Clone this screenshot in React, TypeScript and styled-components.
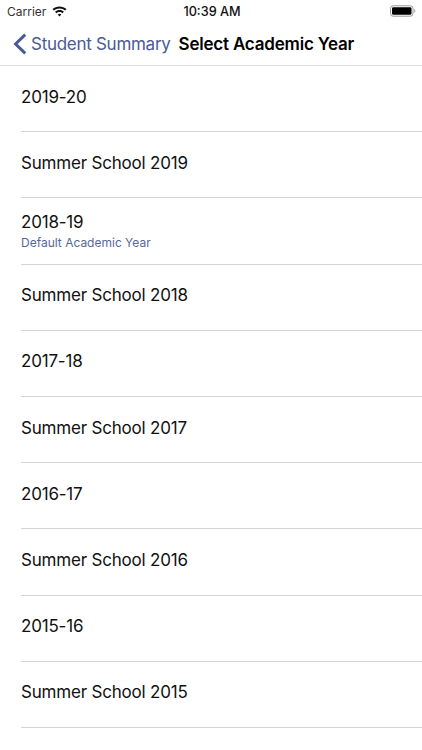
import React from 'react';
import styled, { createGlobalStyle } from 'styled-components';

const GlobalStyle = createGlobalStyle`
  html, body {
    margin: 0;
    padding: 0;
    background: #fff;
  }
  body {
    font-family: Inter, "Liberation Sans", Arial, sans-serif;
    color: #000;
    overflow: hidden;
  }
`;

const Page = styled.div`
  width: 422px;
  height: 750px;
  overflow: hidden;
  background: #fff;
`;

const StatusBar = styled.div`
  display: grid;
  grid-template-columns: 1fr auto 1fr;
  align-items: center;
  height: 22px;
  padding: 0 6px 0 8px;
  font-size: 12px;
  color: #111;
`;

const StatusLeft = styled.div`
  display: flex;
  align-items: center;
  gap: 6px;
  margin-left: -1px;
  color: #333;
`;

const StatusRight = styled.div`
  display: flex;
  justify-content: flex-end;
`;

const Time = styled.div`
  font-weight: 500;
  font-size: 12.7px;
`;

const NavBar = styled.div`
  display: flex;
  align-items: center;
  box-sizing: border-box;
  height: 44px;
  padding: 0 0 0 13px;
  border-bottom: 1px solid #dedede;
`;

const BackLink = styled.div`
  display: flex;
  align-items: center;
  gap: 4px;
  color: #4a5a97;
  font-size: 17px;
  letter-spacing: -0.28px;
`;

const Title = styled.div`
  margin-left: 8px;
  font-size: 17px;
  font-weight: 600;
  letter-spacing: -0.2px;
`;

const List = styled.div`
  display: flex;
  flex-direction: column;
`;

const Row = styled.div<{ $hasNote: boolean }>`
  display: flex;
  flex-direction: column;
  box-sizing: border-box;
  height: 66.2px;
  margin-left: 21px;
  padding-top: ${(p) => (p.$hasNote ? 13 : 19.6)}px;
  border-bottom: 1px solid #d4d4d4;
`;

const RowTitle = styled.div`
  font-size: 17px;
  line-height: 22px;
  letter-spacing: -0.2px;
  color: #111;
`;

const RowSubtitle = styled.div`
  margin-top: 1.5px;
  font-size: 12px;
  line-height: 15px;
  color: #56689a;
`;

const years = [
  { name: '2019-20' },
  { name: 'Summer School 2019' },
  { name: '2018-19', note: 'Default Academic Year' },
  { name: 'Summer School 2018' },
  { name: '2017-18' },
  { name: 'Summer School 2017' },
  { name: '2016-17' },
  { name: 'Summer School 2016' },
  { name: '2015-16' },
  { name: 'Summer School 2015' },
];

function Wifi() {
  return (
    <svg width="15" height="11" viewBox="0 0 15 11" fill="#111">
      <path d="M7.5 0.4C4.8 0.4 2.4 1.4 0.5 3.1L1.9 4.6C3.4 3.2 5.4 2.4 7.5 2.4C9.6 2.4 11.6 3.2 13.1 4.6L14.5 3.1C12.6 1.4 10.2 0.4 7.5 0.4Z" />
      <path d="M7.5 4.1C5.8 4.1 4.3 4.7 3.1 5.8L4.5 7.3C5.3 6.6 6.4 6.1 7.5 6.1C8.6 6.1 9.7 6.6 10.5 7.3L11.9 5.8C10.7 4.7 9.2 4.1 7.5 4.1Z" />
      <path d="M7.5 7.7C6.8 7.7 6.2 8 5.7 8.4L7.5 10.4L9.3 8.4C8.8 8 8.2 7.7 7.5 7.7Z" />
    </svg>
  );
}

function Battery() {
  return (
    <svg width="26" height="12" viewBox="0 0 26 12">
      <rect x="0.5" y="0.8" width="22.5" height="10.4" rx="2.6" fill="none" stroke="#999" />
      <rect x="2" y="2.2" width="19.5" height="7.6" rx="1.4" fill="#000" />
      <path d="M24.2 4.2C25 4.4 25.4 5.1 25.4 6C25.4 6.9 25 7.6 24.2 7.8Z" fill="#aaa" />
    </svg>
  );
}

function Chevron() {
  return (
    <svg width="14" height="22" viewBox="0 0 14 22" fill="none">
      <path d="M12.2 1.6L2.6 11L12.2 20.4" stroke="#4a5a97" strokeWidth="3" />
    </svg>
  );
}

export default function App() {
  return (
    <Page>
      <GlobalStyle />
      <StatusBar>
        <StatusLeft>
          Carrier
          <Wifi />
        </StatusLeft>
        <Time>10:39 AM</Time>
        <StatusRight>
          <Battery />
        </StatusRight>
      </StatusBar>
      <NavBar>
        <BackLink>
          <Chevron />
          Student Summary
        </BackLink>
        <Title>Select Academic Year</Title>
      </NavBar>
      <List>
        {years.map((year) => (
          <Row key={year.name} $hasNote={Boolean(year.note)}>
            <RowTitle>{year.name}</RowTitle>
            {year.note && <RowSubtitle>{year.note}</RowSubtitle>}
          </Row>
        ))}
      </List>
    </Page>
  );
}
